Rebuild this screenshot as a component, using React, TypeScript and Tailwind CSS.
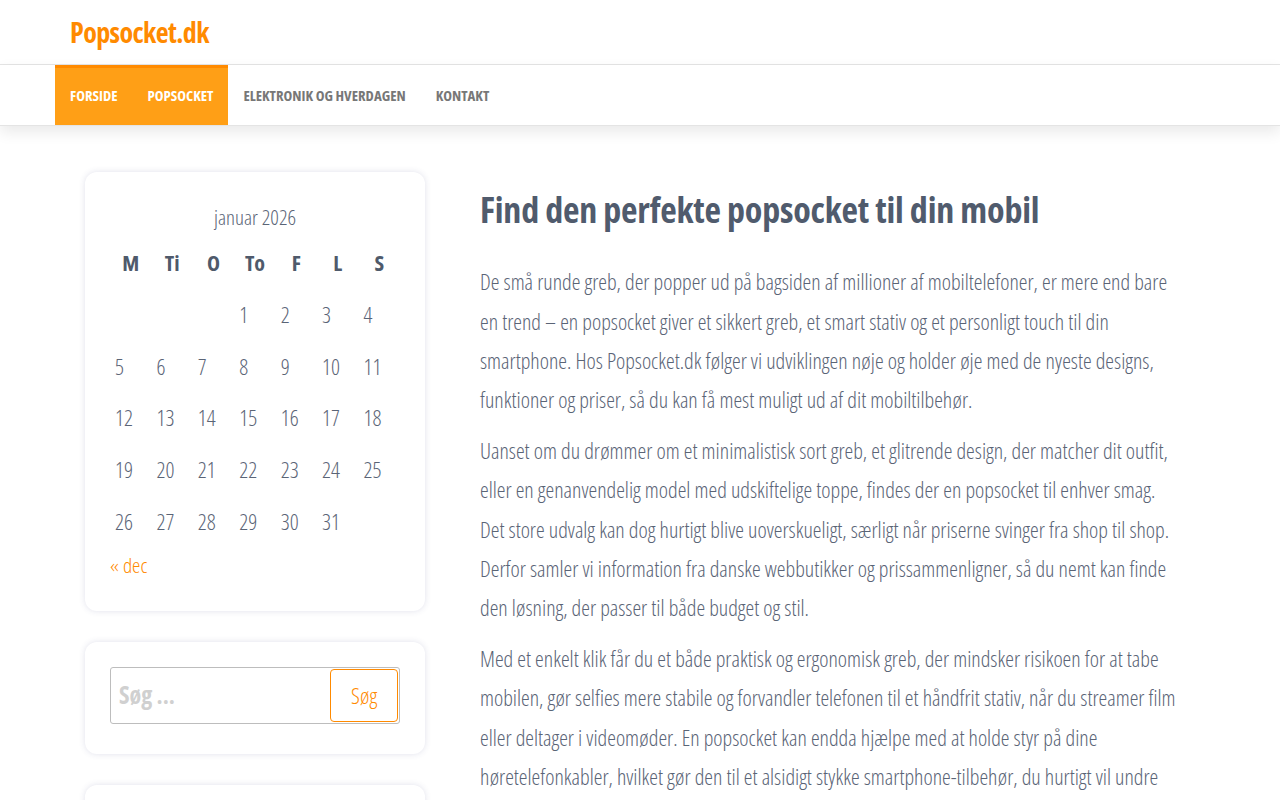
import { type JSX } from "react";

const days: (number | null)[][] = [
  [null, null, null, 1, 2, 3, 4],
  [5, 6, 7, 8, 9, 10, 11],
  [12, 13, 14, 15, 16, 17, 18],
  [19, 20, 21, 22, 23, 24, 25],
  [26, 27, 28, 29, 30, 31, null],
];

const heads = ["M", "Ti", "O", "To", "F", "L", "S"];

export default function App(): JSX.Element {
  return (
    <div className="min-h-screen bg-white font-['Open_Sans',sans-serif] font-stretch-condensed text-[#5a6476]">
      {/* header */}
      <header className="h-[65px] border-b border-[#e5e5e5] flex items-center">
        <div className="w-[1170px] mx-auto px-[15px]">
          <a className="text-[28px] font-bold text-[#ff8a00] tracking-[-0.6px]">Popsocket.dk</a>
        </div>
      </header>
      {/* nav */}
      <nav className="h-[61px] bg-white shadow-[0_6px_14px_rgba(0,0,0,0.09)] border-b border-[#e4e4e4] relative z-10">
        <div className="w-[1170px] mx-auto flex h-full">
          <div className="flex bg-[#ff9f16] border-t-[3px] border-[#ff8a00]">
            <a className="px-[15px] pb-[3px] flex items-center text-[14.8px] font-bold text-white uppercase">Forside</a>
            <a className="px-[15px] pb-[3px] flex items-center text-[14.8px] font-bold text-white uppercase">Popsocket</a>
          </div>
          <a className="px-[15px] flex items-center text-[14.8px] font-bold text-[#777] uppercase">Elektronik og hverdagen</a>
          <a className="px-[15px] flex items-center text-[14.8px] font-bold text-[#777] uppercase">Kontakt</a>
        </div>
      </nav>

      <div className="w-[1170px] mx-auto flex pt-[46px]">
        {/* sidebar */}
        <aside className="w-[340px] ml-[30px] flex flex-col gap-[31px]">
          <div className="rounded-xl bg-white shadow-[0_0_6px_rgba(60,70,130,0.16)] px-[25px] pt-[30px] pb-[29px] font-light">
            <div className="text-center text-[21px] text-[#5a6476] mb-[12px]">januar 2026</div>
            <table className="w-full">
              <thead>
                <tr>
                  {heads.map((h) => (
                    <th key={h} className="text-center text-[22px] font-bold text-[#4f5a6b] pb-[10px] w-[41px]">{h}</th>
                  ))}
                </tr>
              </thead>
              <tbody>
                {days.map((row, i) => (
                  <tr key={i} className="h-[51.75px]">
                    {row.map((d, j) => (
                      <td key={j} className="text-left pl-[5px] text-[22px] text-[#5a6476]">{d ?? ""}</td>
                    ))}
                  </tr>
                ))}
              </tbody>
            </table>
            <a className="block mt-[3px] text-[21px] text-[#ff8a00]">« dec</a>
          </div>

          <div className="rounded-xl bg-white shadow-[0_0_6px_rgba(60,70,130,0.16)] px-[25px] pt-[25px] pb-[30px]">
            <div className="flex h-[57px] border border-[#bdbdbd] rounded-[3px] items-center pr-[1px]">
              <div className="flex-1 pl-[8px] text-[24px] font-bold text-[#d0d0d0]">Søg ...</div>
              <button className="h-[53px] w-[68px] border border-[#ff8a00] rounded-[4px] text-[22px] font-light text-[#ff8a00]">Søg</button>
            </div>
          </div>

          <div className="rounded-xl bg-white shadow-[0_0_6px_rgba(60,70,130,0.16)] h-[100px]"></div>
        </aside>

        {/* content */}
        <main className="w-[700px] ml-[55px] pt-[16px]">
          <h1 className="text-[36px] font-bold text-[#505b6d] leading-[1.2] tracking-[-0.2px] mb-[31px]">
            Find den perfekte popsocket til din mobil
          </h1>
          <p className="text-[22px] font-light leading-[39.4px] mb-[11px]">
            De små runde greb, der popper ud på bagsiden af millioner af mobiltelefoner, er mere end bare en trend – en popsocket giver et sikkert greb, et smart stativ og et personligt touch til din smartphone. Hos Popsocket.dk følger vi udviklingen nøje og holder øje med de nyeste designs, funktioner og priser, så du kan få mest muligt ud af dit mobiltilbehør.
          </p>
          <p className="text-[22px] font-light leading-[39.4px] mb-[11px]">
            Uanset om du drømmer om et minimalistisk sort greb, et glitrende design, der matcher dit outfit, eller en genanvendelig model med udskiftelige toppe, findes der en popsocket til enhver smag. Det store udvalg kan dog hurtigt blive uoverskueligt, særligt når priserne svinger fra shop til shop. Derfor samler vi information fra danske webbutikker og prissammenligner, så du nemt kan finde den løsning, der passer til både budget og stil.
          </p>
          <p className="text-[22px] font-light leading-[39.4px] mb-[11px]">
            Med et enkelt klik får du et både praktisk og ergonomisk greb, der mindsker risikoen for at tabe mobilen, gør selfies mere stabile og forvandler telefonen til et håndfrit stativ, når du streamer film eller deltager i videomøder. En popsocket kan endda hjælpe med at holde styr på dine høretelefonkabler, hvilket gør den til et alsidigt stykke smartphone-tilbehør, du hurtigt vil undre dig over, hvordan du klarede dig uden.
          </p>
        </main>
      </div>
    </div>
  );
}
